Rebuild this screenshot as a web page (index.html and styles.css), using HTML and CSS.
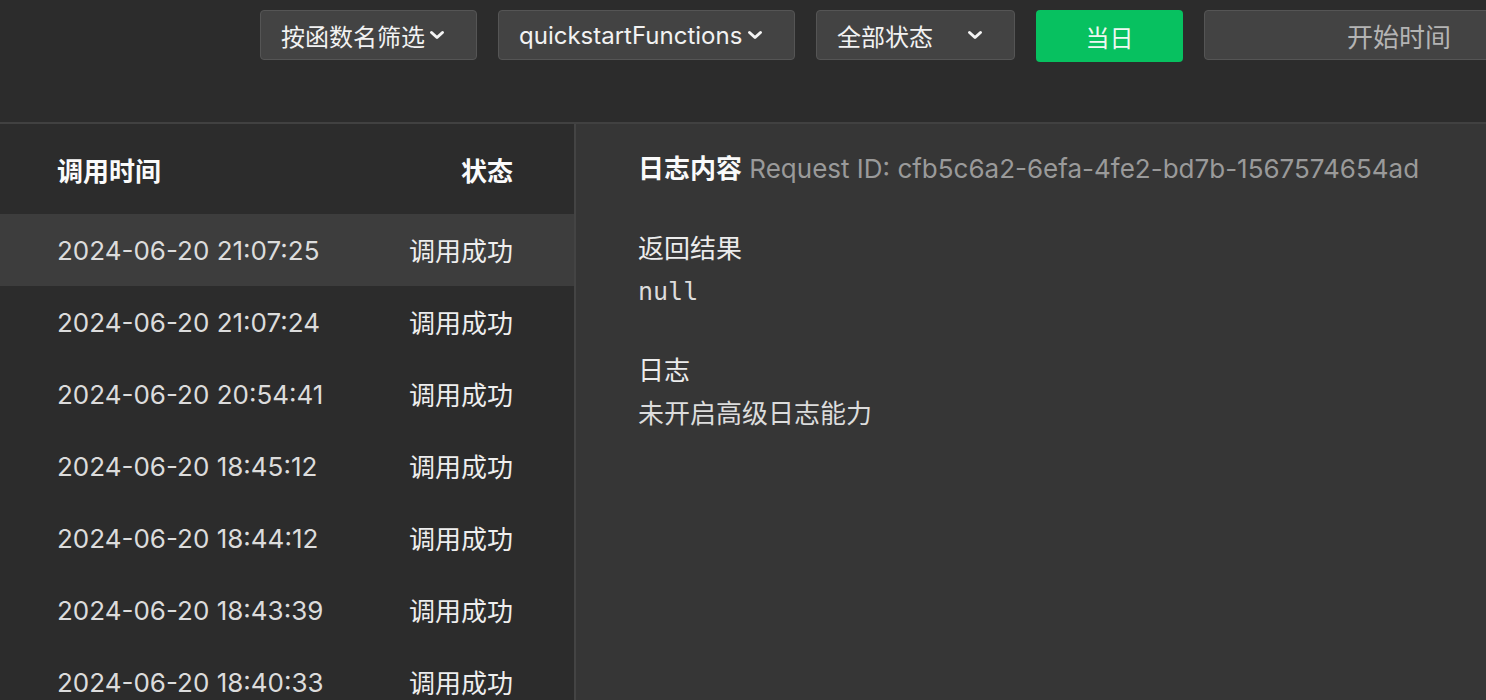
FILE: index.html
```html
<!DOCTYPE html>
<html lang="zh">
<head>
<meta charset="utf-8">
<link rel="stylesheet" href="styles.css">
</head>
<body>
<div class="toolbar">
  <div class="select sel-fn"><span>按函数名筛选</span><svg class="chev" viewBox="0 0 16 10"><path d="M2.5 2.5l5.5 5 5.5-5"/></svg></div>
  <div class="select sel-name"><span>quickstartFunctions</span><svg class="chev" viewBox="0 0 16 10"><path d="M2.5 2.5l5.5 5 5.5-5"/></svg></div>
  <div class="select sel-status"><span>全部状态</span><svg class="chev" viewBox="0 0 16 10"><path d="M2.5 2.5l5.5 5 5.5-5"/></svg></div>
  <div class="btn-green">当日</div>
  <div class="date-input"><span>开始时间</span></div>
</div>
<div class="main">
  <div class="list">
    <div class="list-head"><span class="bold">调用时间</span><span class="bold">状态</span></div>
    <div class="row active"><span>2024-06-20 21:07:25</span><span class="cn">调用成功</span></div>
    <div class="row"><span>2024-06-20 21:07:24</span><span class="cn">调用成功</span></div>
    <div class="row"><span>2024-06-20 20:54:41</span><span class="cn">调用成功</span></div>
    <div class="row"><span>2024-06-20 18:45:12</span><span class="cn">调用成功</span></div>
    <div class="row"><span>2024-06-20 18:44:12</span><span class="cn">调用成功</span></div>
    <div class="row"><span>2024-06-20 18:43:39</span><span class="cn">调用成功</span></div>
    <div class="row"><span>2024-06-20 18:40:33</span><span class="cn">调用成功</span></div>
  </div>
  <div class="detail">
    <div class="detail-title"><span class="bold">日志内容</span> <span class="reqid">Request ID: cfb5c6a2-6efa-4fe2-bd7b-1567574654ad</span></div>
    <div class="section first">
      <div class="label">返回结果</div>
      <div class="value mono">null</div>
    </div>
    <div class="section">
      <div class="label">日志</div>
      <div class="value">未开启高级日志能力</div>
    </div>
  </div>
</div>
</body>
</html>
```
FILE: styles.css
```css
* { box-sizing: border-box; }
html, body { margin: 0; padding: 0; }
body {
  width: 1486px;
  height: 700px;
  overflow: hidden;
  background: #2c2c2c;
  color: #e6e6e6;
  font-family: "Inter", "Noto Sans CJK SC", sans-serif;
  font-size: 26px;
}
.bold { font-weight: 600; color: #fafafa; }

.toolbar {
  height: 124px;
  display: flex;
  align-items: flex-start;
  gap: 21px;
  padding: 10px 0 0 260px;
  border-bottom: 2px solid #414141;
  white-space: nowrap;
}
.select {
  height: 50px;
  display: flex;
  align-items: center;
  background: #434343;
  border: 1px solid #555555;
  border-radius: 4px;
  padding-left: 20px;
  font-size: 24px;
  color: #f2f2f2;
  flex-shrink: 0;
}
.chev { width: 16px; height: 10px; fill: none; stroke: #f4f4f4; stroke-width: 3; stroke-linecap: round; stroke-linejoin: round; }
.sel-fn { width: 217px; }
.sel-fn .chev { margin-left: 4px; }
.sel-name { width: 297px; }
.sel-name .chev { margin-left: 5px; }
.sel-status { width: 199px; }
.sel-status .chev { margin-left: 34px; }
.btn-green {
  width: 147px;
  height: 52px;
  background: #07c160;
  border-radius: 4px;
  display: flex;
  align-items: center;
  justify-content: center;
  font-size: 24px;
  color: #eef8f1;
  flex-shrink: 0;
}
.date-input {
  width: 320px;
  height: 50px;
  display: flex;
  align-items: center;
  background: #434343;
  border: 1px solid #555555;
  border-radius: 4px;
  padding-left: 142px;
  color: #b4b4b4;
  flex-shrink: 0;
}

.main {
  display: flex;
  height: 576px;
}
.list {
  width: 576px;
  border-right: 2px solid #444444;
  flex-shrink: 0;
}
.list-head, .row {
  display: flex;
  justify-content: space-between;
  align-items: center;
  padding: 0 61px 0 57px;
}
.list-head { height: 90px; }
.row { height: 72px; color: #dcdcdc; }
.row .cn { color: #eeeeee; position: relative; top: -1px; }
.row.active { background: #3d3d3d; }

.detail {
  flex: 1;
  background: #363636;
  padding-left: 62px;
}
.detail-title { height: 90px; line-height: 90px; }
.reqid { color: #9a9a9a; }
.section.first { margin-top: 14px; }
.section { margin-top: 36px; }
.label { line-height: 42px; color: #ececec; }
.value { line-height: 44px; color: #dcdcdc; }
.mono { font-family: "DejaVu Sans Mono", monospace; font-size: 25px; }
```
